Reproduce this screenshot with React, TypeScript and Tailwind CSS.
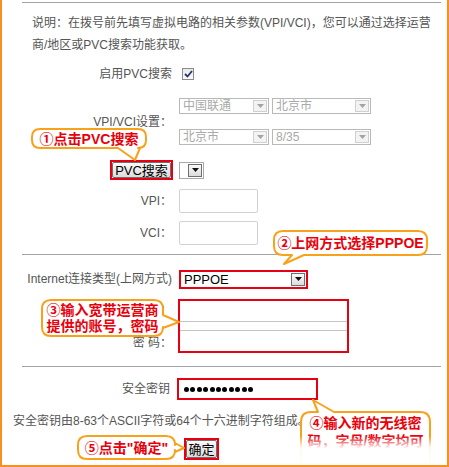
import React from "react";

// speech-bubble outline: rounded rect with a tail on one side
function bubblePath(
  x0: number, y0: number, x1: number, y1: number, r: number,
  side: "top" | "right" | "bottom" | "left",
  a: number, b: number, tx: number, ty: number
) {
  let d = `M${x0 + r},${y0}`;
  if (side === "top") d += ` H${a} L${tx},${ty} L${b},${y0}`;
  d += ` H${x1 - r} Q${x1},${y0} ${x1},${y0 + r}`;
  if (side === "right") d += ` V${a} L${tx},${ty} L${x1},${b}`;
  d += ` V${y1 - r} Q${x1},${y1} ${x1 - r},${y1}`;
  if (side === "bottom") d += ` H${a} L${tx},${ty} L${b},${y1}`;
  d += ` H${x0 + r} Q${x0},${y1} ${x0},${y1 - r}`;
  if (side === "left") d += ` V${a} L${tx},${ty} L${x0},${b}`;
  d += ` V${y0 + r} Q${x0},${y0} ${x0 + r},${y0} Z`;
  return d;
}

const bubbles = [
  bubblePath(32, 129, 146, 148, 8, "bottom", 140, 118, 135, 160),
  bubblePath(274, 231, 427, 255, 9, "bottom", 304, 292, 284, 264),
  bubblePath(42, 300, 163, 336, 9, "right", 315, 328, 179, 322),
  bubblePath(301, 412, 430, 490, 10, "top", 318, 334, 313, 400),
  bubblePath(78, 436, 175, 459, 9, "right", 443, 452, 184, 448),
];

function Arrow({ dark = false }: { dark?: boolean }) {
  return (
    <svg width="7" height="4" viewBox="0 0 7 4">
      <path d="M0 0h7L3.5 4z" fill={dark ? "#111" : "#a3a3a3"} />
    </svg>
  );
}

function DisabledSelect({ className, text }: { className: string; text: string }) {
  return (
    <div className={`flex h-[16px] items-center border border-[#b9b9b9] bg-white ${className}`}>
      <span className="flex-1 pl-[3px] text-[12px] leading-none text-[#a9a9a9]">{text}</span>
      <span className="mr-[1px] flex h-[12px] w-[14px] items-center justify-center border border-[#d0d0d0] bg-[#f3f3f3]">
        <Arrow />
      </span>
    </div>
  );
}

function Row({
  label,
  className = "",
  children,
}: {
  label: React.ReactNode;
  className?: string;
  children: React.ReactNode;
}) {
  return (
    <div className={`flex items-center ${className}`}>
      <div className="w-[170px] shrink-0 text-right">{label}</div>
      <div className="ml-[7px] flex items-center">{children}</div>
    </div>
  );
}

function Btn({ children, className = "" }: { children: React.ReactNode; className?: string }) {
  return (
    <div
      className={`flex items-center justify-center rounded-[2px] border border-[#6f6f6f] bg-[linear-gradient(#fafafa,#dcdcdc)] text-[13px] leading-none text-black ${className}`}
    >
      {children}
    </div>
  );
}

export default function App() {
  return (
    <div className="relative h-[467px] w-[449px] overflow-hidden border-x-2 border-b-2 border-[#f7901e] bg-white font-['Liberation_Sans','Noto_Sans_CJK_SC',sans-serif] text-[12px] text-[#555]">
      <div className="ml-[20px] mt-[2px] h-px w-[419px] bg-[#a3a3a3]" />

      <p className="whitespace-nowrap pl-[30px] pt-[9px] leading-[22px]">
        说明：在拨号前先填写虚拟电路的相关参数(VPI/VCI)，您可以通过选择运营
        <br />
        商/地区或PVC搜索功能获取。
      </p>

      <Row label="启用PVC搜索" className="mt-[8px] h-[20px]">
        <div className="ml-[3px] flex h-[12px] w-[12px] items-center justify-center border border-[#8c8c8c] bg-[linear-gradient(#e8e8e8,#fbfbfb)]">
          <svg width="9" height="8" viewBox="0 0 9 8">
            <path d="M1 4l2.5 2.5L8 1" stroke="#27356b" strokeWidth="1.8" fill="none" />
          </svg>
        </div>
      </Row>

      <Row label="VPI/VCI设置：" className="mt-[14px] h-[47px]">
        <div className="flex flex-col gap-[15px]">
          <div className="flex gap-[3px]">
            <DisabledSelect className="w-[90px]" text="中国联通" />
            <DisabledSelect className="w-[99px]" text="北京市" />
          </div>
          <div className="flex gap-[3px]">
            <DisabledSelect className="w-[90px]" text="北京市" />
            <DisabledSelect className="w-[99px]" text="8/35" />
          </div>
        </div>
      </Row>

      <div className="mt-[15px] flex h-[20px] items-center">
        <div className="flex w-[170px] shrink-0 justify-end">
          <div className="-mr-[1px] flex h-[20px] w-[63px] border-2 border-[#e60012]">
            <Btn className="flex-1">PVC搜索</Btn>
          </div>
        </div>
        <div className="ml-[7px] flex h-[17px] w-[25px] items-center justify-end border border-[#a8a8a8] bg-white pr-[1px]">
          <div className="flex h-[13px] w-[14px] items-center justify-center border border-[#6f6f6f] bg-[linear-gradient(#fafafa,#dcdcdc)]">
            <Arrow dark />
          </div>
        </div>
      </div>

      <Row label="VPI：" className="mt-[9px] h-[24px]">
        <div className="h-[24px] w-[79px] rounded-[2px] border border-[#d2d2d2] bg-white" />
      </Row>
      <Row label="VCI：" className="mt-[8px] h-[24px]">
        <div className="h-[24px] w-[79px] rounded-[2px] border border-[#d2d2d2] bg-white" />
      </Row>

      <div className="ml-[20px] mt-[9px] h-px w-[419px] bg-[#a3a3a3]" />

      <Row label="Internet连接类型(上网方式)" className="mt-[15px] h-[18px]">
        <div className="flex h-[19px] w-[129px] items-center border-2 border-[#e60012] bg-white">
          <span className="flex-1 pl-[3px] text-[13px] leading-none text-black">PPPOE</span>
          <div className="mr-[1px] flex h-[13px] w-[14px] items-center justify-center border border-[#6f6f6f] bg-[linear-gradient(#fafafa,#dcdcdc)]">
            <Arrow dark />
          </div>
        </div>
      </Row>

      <div className="mt-[11px] flex">
        <div className="flex w-[170px] shrink-0 flex-col text-right">
          <div className="h-[22px] leading-[22px]">用户名：</div>
          <div className="mt-[11px] h-[22px] leading-[22px]">密 码：</div>
        </div>
        <div className="ml-[6px] flex h-[54px] w-[171px] flex-col gap-[8px] border-2 border-[#e60012] bg-white">
          <div className="h-[21px] border-b border-[#c4c4c4]" />
          <div className="h-[21px] border-t border-[#c4c4c4]" />
        </div>
      </div>

      <div className="ml-[20px] mt-[12px] h-px w-[419px] bg-[#a3a3a3]" />

      <div className="mt-[11px] flex h-[22px] items-center">
        <div className="w-[168px] shrink-0 text-right text-[12px]">安全密钥</div>
        <div className="ml-[7px] flex h-[22px] w-[141px] items-center gap-[1.4px] border-2 border-[#e60012] bg-white pl-[5px]">
          {Array.from({ length: 11 }).map((_, i) => (
            <span key={i} className="h-[5px] w-[5px] rounded-full bg-black" />
          ))}
        </div>
      </div>

      <div className="mt-[11px] h-[20px] whitespace-nowrap pl-[11px] leading-[20px]">
        安全密钥由8-63个ASCII字符或64个十六进制字符组成。
      </div>

      <div className="ml-[182px] mt-[7px] flex h-[22px] w-[35px] border-2 border-[#e60012]">
        <Btn className="flex-1">确定</Btn>
      </div>

      {/* annotation layer, page coordinates */}
      <div className="pointer-events-none absolute -left-[2px] top-0 h-[467px] w-[449px]">
        <svg className="absolute left-0 top-0" width="449" height="467">
          {bubbles.map((d, i) => (
            <path key={i} d={d} fill="#fff" stroke="#f8a21c" strokeWidth="2" strokeLinejoin="round" />
          ))}
        </svg>
        <div className="absolute font-bold text-[#e8000b] text-[14px] leading-none">
          <div className="absolute left-[32px] top-[129px] flex h-[19px] w-[114px] items-center justify-center whitespace-nowrap">
            ①点击PVC搜索
          </div>
          <div className="absolute left-[274px] top-[231px] flex h-[24px] w-[153px] items-center justify-center whitespace-nowrap">
            ②上网方式选择PPPOE
          </div>
          <div className="absolute left-[42px] top-[302px] flex w-[121px] flex-col items-center whitespace-nowrap leading-[16px]">
            <span>③输入宽带运营商</span>
            <span>提供的账号，密码</span>
          </div>
          <div className="absolute left-[301px] top-[414px] flex w-[129px] flex-col items-center whitespace-nowrap leading-[18px]">
            <span>④输入新的无线密</span>
            <span>码，字母/数字均可</span>
          </div>
          <div className="absolute left-[78px] top-[436px] flex h-[23px] w-[97px] items-center justify-center whitespace-nowrap">
            ⑤点击"确定"
          </div>
        </div>
        <div className="absolute left-[240px] top-[436px] h-[29px] w-[206px] bg-[linear-gradient(to_bottom,rgba(255,255,255,0)_0%,rgba(255,255,255,0.92)_40%,#fff_100%)]" />
      </div>
    </div>
  );
}
